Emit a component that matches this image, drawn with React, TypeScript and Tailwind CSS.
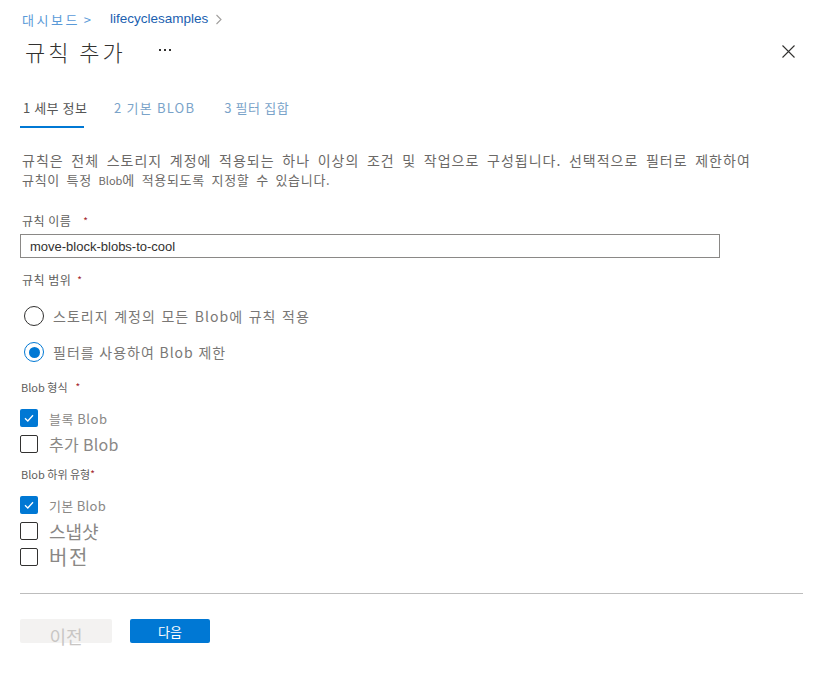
import React, { useState } from 'react';

const FONT = '"Noto Sans CJK KR", "Liberation Sans", sans-serif';
const LATIN = '"Liberation Sans", "Noto Sans CJK KR", sans-serif';

function Check({ checked, label, textClass }: { checked: boolean; label: string; textClass: string }) {
  return (
    <div className="flex items-center h-[26px]">
      {checked ? (
        <span className="w-[18px] h-[18px] rounded-[2px] bg-[#0078d4] flex items-center justify-center">
          <svg width="12" height="12" viewBox="0 0 12 12" fill="none">
            <path d="M2 6.3 L4.8 9 L10 3.2" stroke="#fff" strokeWidth="1.3" />
          </svg>
        </span>
      ) : (
        <span className="w-[18px] h-[18px] rounded-[2px] border border-[#323130] bg-white" />
      )}
      <span className={`ml-[11px] text-[#8a8886] leading-none whitespace-nowrap ${textClass}`}>{label}</span>
    </div>
  );
}

function Radio({ checked, label, spacing }: { checked: boolean; label: string; spacing: string }) {
  return (
    <div className="flex items-center h-[36px] pl-[4px]">
      {checked ? (
        <span className="w-[20px] h-[20px] rounded-full border border-[#0078d4] flex items-center justify-center">
          <span className="w-[11px] h-[11px] rounded-full bg-[#0078d4]" />
        </span>
      ) : (
        <span className="w-[20px] h-[20px] rounded-full border border-[#323130]" />
      )}
      <span className={`ml-[9px] text-[14px] text-[#797775] leading-none whitespace-nowrap ${spacing}`}>{label}</span>
    </div>
  );
}

export default function App() {
  const [name, setName] = useState('move-block-blobs-to-cool');
  return (
    <div className="w-[823px] h-[673px] bg-white overflow-hidden" style={{ fontFamily: FONT }}>
      <div className="pl-[20px] pr-[20px]">
        {/* breadcrumb */}
        <div className="flex items-center h-[18px] mt-[10px] text-[13px] leading-none whitespace-nowrap">
          <span className="text-[#5a9ad8] ml-[2px] tracking-[2.5px]">대시보드</span>
          <span className="text-[#5a9ad8] ml-[4px]">&gt;</span>
          <span className="text-[#1b5fb0] ml-[19px] text-[13.5px]" style={{ fontFamily: LATIN }}>lifecyclesamples</span>
          <svg className="ml-[7px]" width="8" height="11" viewBox="0 0 8 11" fill="none">
            <path d="M1.5 1 L6 5.5 L1.5 10" stroke="#a19f9d" strokeWidth="1.1" />
          </svg>
        </div>

        {/* title */}
        <div className="flex items-center h-[34px] mt-[6px]">
          <h1 className="ml-[5px] text-[22px] font-light text-[#323130] leading-none tracking-[3px] whitespace-nowrap">규칙 추가</h1>
          <span className="ml-[33px] flex gap-[3px] -mt-[2px]">
            <span className="w-[2px] h-[2px] bg-[#323130]" />
            <span className="w-[2px] h-[2px] bg-[#323130]" />
            <span className="w-[2px] h-[2px] bg-[#323130]" />
          </span>
          <div className="flex-1" />
          <svg className="mr-[8px]" width="13" height="13" viewBox="0 0 13 13" fill="none">
            <path d="M0.5 0.5 L12.5 12.5 M12.5 0.5 L0.5 12.5" stroke="#323130" strokeWidth="1.1" />
          </svg>
        </div>

        {/* tabs */}
        <div className="flex items-end h-[42px] mt-[18px] text-[13px] leading-none whitespace-nowrap">
          <div className="flex flex-col w-[64px]">
            <span className="text-[#555555] pb-[12px] pl-[3px] tracking-[0.5px]">1 세부 정보</span>
            <span className="h-[2px] bg-[#0078d4]" />
          </div>
          <span className="ml-[30px] pb-[14px] text-[#7aa3c9] tracking-[1.2px]">2 기본 BLOB</span>
          <span className="ml-[29px] pb-[14px] text-[#7aa3c9] tracking-[0.6px]">3 필터 집합</span>
        </div>

        {/* description */}
        <div className="mt-[22px] ml-[2px] text-[#6b6967] whitespace-nowrap">
          <p className="text-[14px] leading-[20px] tracking-[1px] [word-spacing:3.5px]">
            규칙은 전체 스토리지 계정에 적용되는 하나 이상의 조건 및 작업으로 구성됩니다. 선택적으로 필터로 제한하여
          </p>
          <p className="text-[13px] leading-[20px] tracking-[0.7px] [word-spacing:3px]">
            규칙이 특정 <span className="text-[11px] tracking-normal">Blob</span>에 적용되도록 지정할 수 있습니다.
          </p>
        </div>

        {/* rule name */}
        <div className="mt-[23px] ml-[2px] flex items-center h-[16px] text-[12px] text-[#605e5c] leading-none tracking-[0.5px]">
          규칙 이름 <span className="ml-[12px] text-[#a4262c] text-[10px]">*</span>
        </div>
        <input
          value={name}
          onChange={(e) => setName(e.target.value)}
          className="mt-[5px] w-[700px] h-[24px] border border-[#8a8886] px-[9px] text-[13px] text-[#323130] outline-none"
          style={{ fontFamily: LATIN }}
        />

        {/* scope */}
        <div className="mt-[14px] ml-[2px] flex items-center h-[16px] text-[12px] text-[#605e5c] leading-none tracking-[0.5px]">
          규칙 범위 <span className="ml-[6px] text-[#a4262c] text-[10px]">*</span>
        </div>
        <div className="mt-[10px]">
          <Radio checked={false} label="스토리지 계정의 모든 Blob에 규칙 적용" spacing="tracking-[1px] [word-spacing:1.5px]" />
          <Radio checked={true} label="필터를 사용하여 Blob 제한" spacing="tracking-[1px] [word-spacing:0.5px] -ml-[2px]" />
        </div>

        {/* blob type */}
        <div className="mt-[10px] ml-[1px] flex items-center h-[14px] text-[11px] text-[#605e5c] leading-none">
          Blob 형식 <span className="ml-[8px] text-[#a4262c] text-[10px]">*</span>
        </div>
        <div className="mt-[11px]">
          <Check checked={true} label="블록 Blob" textClass="text-[13px] tracking-[0.5px]" />
          <Check checked={false} label="추가 Blob" textClass="text-[16px] tracking-[0.3px]" />
        </div>

        {/* subtype */}
        <div className="mt-[10px] ml-[1px] flex items-center h-[14px] text-[11px] text-[#605e5c] leading-none">
          Blob 하위 유형<span className="text-[#a4262c] text-[10px]">*</span>
        </div>
        <div className="mt-[11px]">
          <Check checked={true} label="기본 Blob" textClass="text-[13px] tracking-[0.3px]" />
          <Check checked={false} label="스냅샷" textClass="text-[18px]" />
          <Check checked={false} label="버전" textClass="text-[20px] tracking-[1.5px]" />
        </div>

        {/* divider */}
        <div className="mt-[23px] h-px bg-[#bdbdbd]" />

        {/* buttons */}
        <div className="flex items-center mt-[25px]">
          <button className="w-[92px] h-[24px] rounded-[2px] bg-[#f3f2f1] text-[18px] text-[#c8c6c4] leading-none pt-[8px]">
            이전
          </button>
          <button className="ml-[18px] w-[80px] h-[24px] rounded-[2px] bg-[#0078d4] text-[13px] text-white leading-none">
            다음
          </button>
        </div>
      </div>
    </div>
  );
}
